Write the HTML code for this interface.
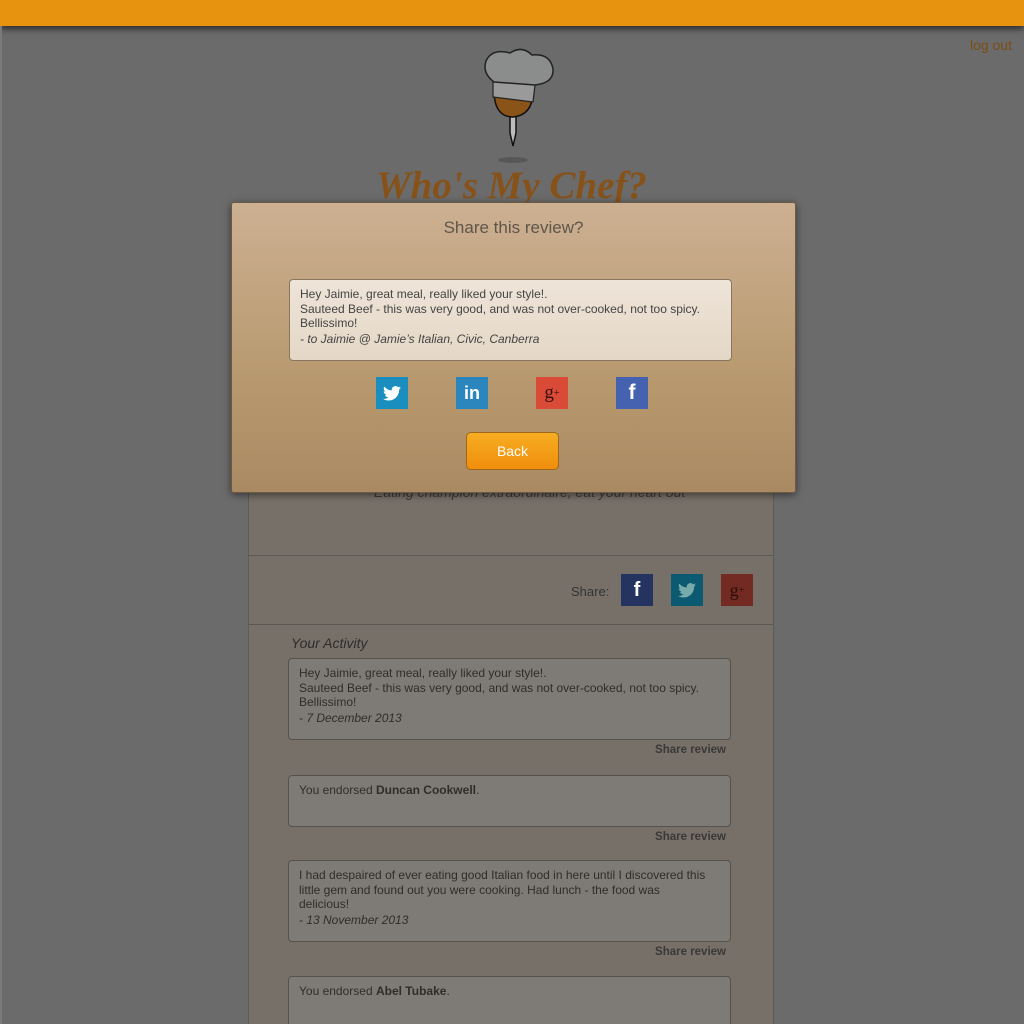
<!DOCTYPE html>
<html><head><meta charset="utf-8"><style>
*{margin:0;padding:0;box-sizing:border-box}
html,body{width:1024px;height:1024px;overflow:hidden}
body{background:#6b6b6b;font-family:"Liberation Sans",sans-serif;position:relative}
.top{position:absolute;left:0;top:0;width:1024px;height:26px;background:#e8930f;box-shadow:0 3px 6px rgba(0,0,0,.6)}
.edge{position:absolute;left:0;top:26px;width:2px;height:1000px;background:#7a7a7a}
.logout{position:absolute;right:12px;top:37px;color:#7a4d15;font-size:14px}
.logo{position:absolute;left:376px;top:163px;width:272px;font-family:"Liberation Serif",serif;font-style:italic;font-weight:bold;font-size:39px;color:#86521a;letter-spacing:0px;white-space:nowrap}
.panel{position:absolute;left:248px;top:480px;width:526px;height:560px;background:#777068;border:1px solid #5e5a55}
.motto{position:absolute;left:125px;top:3px;font-style:italic;font-size:14px;color:#3c3a37}
.hr{position:absolute;left:0;width:524px;height:1px;background:#5c5853}
.share{position:absolute;left:322px;top:103px;font-size:13px;color:#333}
.ic{position:absolute;width:32px;height:32px;display:flex;align-items:center;justify-content:center;color:#fff;font-weight:bold;overflow:hidden}
.card{position:absolute;left:39px;width:443px;border:1px solid #55514c;border-radius:4px;background:#7e7a76;padding:7px 22px 8px 10px;font-size:12px;line-height:14.5px;color:#2f2d2b}
.card i{display:block;margin-top:1px}
.sr{position:absolute;right:47px;font-size:11.5px;font-weight:bold;color:#3a3836}
.modal{position:absolute;left:231px;top:202px;width:565px;height:291px;background:linear-gradient(#ccb092,#b8996f 60%,#aa8a62);border:1px solid #6e5a44;border-radius:3px;box-shadow:0 2px 8px rgba(0,0,0,.5)}
.modal h2{position:absolute;top:15px;width:100%;text-align:center;font-weight:normal;font-size:17px;color:#5e554c}
.mcard{position:absolute;left:57px;top:76px;width:443px;height:82px;border:1px solid #8a7660;border-radius:4px;background:linear-gradient(#eee4d8,#e4d7c6);padding:7px 10px;font-size:12px;line-height:14.5px;color:#444}
.mcard i{display:block;margin-top:1px}
.back{position:absolute;left:234px;top:229px;width:93px;height:38px;border:1px solid #a2661a;border-radius:5px;background:linear-gradient(#f7ad22,#ef8e0c);color:#fff;font-size:14px;text-align:center;line-height:36px}
</style></head><body>
<div class="top"></div><div class="edge"></div>
<div class="logout">log out</div>
<svg style="position:absolute;left:480px;top:45px" width="80" height="125" viewBox="0 0 80 125">
<ellipse cx="33" cy="115" rx="15" ry="3" fill="#444" opacity=".5"/>
<path d="M30 68 L30 88 L33 101 L36 88 L36 68Z" fill="#bbb" stroke="#111" stroke-width="1.5"/>
<path d="M14 42 Q13 72 33 72 Q53 70 53 46 Z" fill="#8a5318" stroke="#111" stroke-width="1.5"/>
<path d="M13 34 L55 40 L53 57 L13 52Z" fill="#9a9a9a" stroke="#222" stroke-width="1.2"/>
<path d="M14 37 Q2 28 6 16 Q12 3 30 8 Q42 0 52 10 Q70 8 73 24 Q74 38 55 40 Z" fill="#8b8d8d" stroke="#222" stroke-width="1.5"/>
</svg>
<div class="logo">Who's My Chef?</div>
<div class="panel">
<div class="motto">Eating champion extraordinaire, eat your heart out</div>
<div class="hr" style="top:74px"></div>
<div class="share">Share:</div>
<div class="ic" style="left:372px;top:93px;background:#253360;font-size:20px">f</div>
<div class="ic" style="left:422px;top:93px;background:#0b5a72"><svg width="18" height="15" viewBox="0 0 24 20"><path d="M24 2.4a10 10 0 0 1-2.8.8 5 5 0 0 0 2.1-2.7 10 10 0 0 1-3.1 1.2A4.9 4.9 0 0 0 11.8 6 14 14 0 0 1 1.7.9a4.9 4.9 0 0 0 1.5 6.6A4.9 4.9 0 0 1 1 6.9a4.9 4.9 0 0 0 3.9 4.8 5 5 0 0 1-2.2.1 4.9 4.9 0 0 0 4.6 3.4A9.9 9.9 0 0 1 0 17.2 14 14 0 0 0 7.5 19.4c9 0 14-7.5 14-14v-.6A10 10 0 0 0 24 2.4z" fill="#7aa"/></svg></div>
<div class="ic" style="left:472px;top:93px;background:#732a22;color:#2a0e0a;font-family:'Liberation Serif';font-weight:normal;font-size:18px">g<sup style="font-size:10px">+</sup></div>
<div class="hr" style="top:143px"></div>
<div style="position:absolute;left:42px;top:154px;font-style:italic;font-size:14px;color:#2e2c2a">Your Activity</div>
<div class="card" style="top:177px;height:82px">Hey Jaimie, great meal, really liked your style!.<br>Sauteed Beef - this was very good, and was not over-cooked, not too spicy.<br>Bellissimo!<i>- 7 December 2013</i></div>
<div class="sr" style="top:263px">Share review</div>
<div class="card" style="top:294px;height:52px">You endorsed <b>Duncan Cookwell</b>.</div>
<div class="sr" style="top:350px">Share review</div>
<div class="card" style="top:379px;height:82px">I had despaired of ever eating good Italian food in here until I discovered this little gem and found out you were cooking. Had lunch - the food was delicious!<i>- 13 November 2013</i></div>
<div class="sr" style="top:465px">Share review</div>
<div class="card" style="top:495px;height:60px">You endorsed <b>Abel Tubake</b>.</div>
</div>
<div class="modal">
<h2>Share this review?</h2>
<div class="mcard">Hey Jaimie, great meal, really liked your style!.<br>Sauteed Beef - this was very good, and was not over-cooked, not too spicy.<br>Bellissimo!<i>- to Jaimie @ Jamie’s Italian, Civic, Canberra</i></div>
<div class="ic" style="left:144px;top:174px;background:#1a8fbf"><svg width="18" height="15" viewBox="0 0 24 20"><path d="M24 2.4a10 10 0 0 1-2.8.8 5 5 0 0 0 2.1-2.7 10 10 0 0 1-3.1 1.2A4.9 4.9 0 0 0 11.8 6 14 14 0 0 1 1.7.9a4.9 4.9 0 0 0 1.5 6.6A4.9 4.9 0 0 1 1 6.9a4.9 4.9 0 0 0 3.9 4.8 5 5 0 0 1-2.2.1 4.9 4.9 0 0 0 4.6 3.4A9.9 9.9 0 0 1 0 17.2 14 14 0 0 0 7.5 19.4c9 0 14-7.5 14-14v-.6A10 10 0 0 0 24 2.4z" fill="#fff"/></svg></div>
<div class="ic" style="left:224px;top:174px;background:#2a86bd;font-size:18px">in</div>
<div class="ic" style="left:304px;top:174px;background:#d94b37;color:#3a0f08;font-family:'Liberation Serif';font-weight:normal;font-size:19px">g<sup style="font-size:10px">+</sup></div>
<div class="ic" style="left:384px;top:174px;background:#4462b0;font-size:21px">f</div>
<div class="back">Back</div>
</div>
</body></html>
